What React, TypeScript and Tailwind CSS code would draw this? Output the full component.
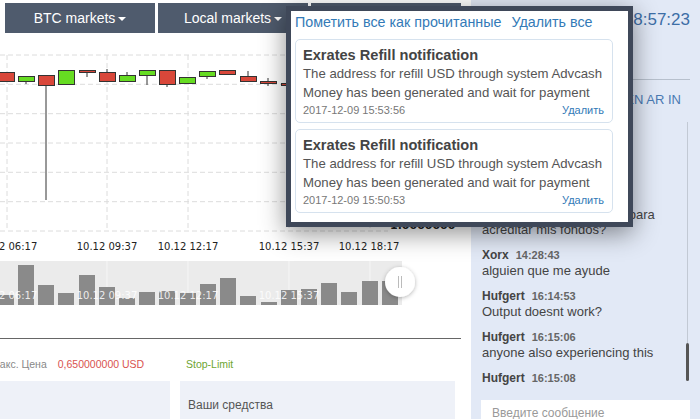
import React from "react";

type Candle = { x: number; t: number; b: number; up: boolean; wt?: number; wb?: number };

const candles: Candle[] = [
  { x: -2, t: 72, b: 81, up: false },
  { x: 18, t: 76, b: 81, up: true, wb: 84 },
  { x: 38, t: 75, b: 85, up: false, wb: 200 },
  { x: 58, t: 70, b: 84, up: true },
  { x: 79, t: 70, b: 72, up: false, wb: 77 },
  { x: 99, t: 72, b: 81, up: false, wt: 69 },
  { x: 119, t: 75, b: 81, up: true, wt: 72 },
  { x: 139, t: 70, b: 75, up: true, wb: 85 },
  { x: 159, t: 70, b: 84, up: false, wb: 87 },
  { x: 179, t: 77, b: 83, up: true },
  { x: 199, t: 71, b: 76, up: true, wb: 79 },
  { x: 219, t: 70, b: 74, up: false },
  { x: 240, t: 76, b: 81, up: false, wt: 71 },
  { x: 260, t: 81, b: 83, up: false, wt: 78, wb: 86 },
  { x: 281, t: 83, b: 85, up: false, wt: 80, wb: 88 },
  { x: 301, t: 80, b: 86, up: true },
  { x: 321, t: 78, b: 84, up: false },
];

const navBars: [number, number][] = [
  [-2, 295], [18, 265], [38, 285], [58, 293], [79, 275], [99, 287], [119, 298],
  [139, 292], [159, 291], [180, 293], [200, 284], [220, 278], [240, 296], [261, 302],
  [281, 290], [301, 289], [321, 283], [341, 292], [362, 281], [382, 281],
];

const hLines = [55, 84.3, 113.7, 143, 172.3, 201.7, 231];
const vLines = [7, 107, 188, 289, 370];
const labels: [number, string][] = [
  [7, "10.12 06:17"], [107, "10.12 09:37"], [188, "10.12 12:17"], [289, "10.12 15:37"], [369, "10.12 18:17"],
];

function Chart() {
  return (
    <svg width={471} height={305} viewBox="0 33 471 305" className="block shrink-0">
      <defs>
        <filter id="hs" x="-50%" y="-50%" width="200%" height="200%">
          <feDropShadow dx="0" dy="1" stdDeviation="2" floodColor="#000" floodOpacity="0.3" />
        </filter>
      </defs>
      {hLines.map((y) => (
        <line key={y} x1={0} x2={388} y1={y} y2={y} stroke="#dcdcdc" strokeDasharray="5 3" />
      ))}
      {vLines.map((x) => (
        <line key={x} x1={x} x2={x} y1={55} y2={231} stroke="#dcdcdc" strokeDasharray="5 3" />
      ))}
      {candles.map((c, i) => {
        const cx = c.x + 8;
        return (
          <g key={i}>
            {(c.wt !== undefined || c.wb !== undefined) && (
              <line x1={cx} x2={cx} y1={c.wt ?? c.t} y2={c.wb ?? c.b} stroke="#333" strokeWidth={1} />
            )}
            <rect x={c.x + 0.5} y={c.t + 0.5} width={16} height={Math.max(c.b - c.t, 1)} fill={c.up ? "#66dc22" : "#d9473a"} stroke="#333" strokeWidth={1} />
          </g>
        );
      })}
      <text x={390} y={229} fontFamily="'DejaVu Sans', sans-serif" fontSize={11} fontWeight="bold" fill="#222">1.0000000</text>
      {labels.map(([x, t]) => (
        <text key={t} x={x} y={250} textAnchor="middle" fontFamily="'DejaVu Sans', Verdana, sans-serif" fontSize={10} fill="#222">{t}</text>
      ))}
      <rect x={0} y={261} width={402} height={44} fill="#ebebeb" />
      {[107, 188, 289, 370].map((x) => (
        <line key={x} x1={x} x2={x} y1={261} y2={305} stroke="#f6f6f6" />
      ))}
      {navBars.map(([x, t], i) => (
        <rect key={i} x={x} y={t} width={16} height={305 - t} fill="#8a8a8a" />
      ))}
      {labels.slice(0, 4).map(([x, t]) => (
        <text key={t} x={x} y={299} textAnchor="middle" fontFamily="'DejaVu Sans', Verdana, sans-serif" fontSize={10} fill="#fff" fillOpacity={0.85}>{t}</text>
      ))}
      <circle cx={400} cy={282} r={15} fill="#fff" filter="url(#hs)" />
      <line x1={398.5} x2={398.5} y1={276} y2={288} stroke="#bbb" />
      <line x1={401.5} x2={401.5} y1={276} y2={288} stroke="#bbb" />
    </svg>
  );
}

function NavButton({ label, caret = true }: { label: string; caret?: boolean }) {
  return (
    <div className="w-[150px] h-[30px] bg-[#4f5b6d] text-white text-[14px] flex items-center justify-center">
      <span>{label}</span>
      {caret && <span className="inline-block w-0 h-0 ml-[3px] mt-[2px] border-x-[4px] border-x-transparent border-t-[4px] border-t-white" />}
    </div>
  );
}

function Card({ date }: { date: string }) {
  return (
    <div className="w-[318px] border border-[#d6e2ee] rounded-[5px] px-[7px] pt-[6px] pb-[5px] whitespace-nowrap">
      <div className="text-[14.6px] leading-[18px] font-bold text-[#444]">Exrates Refill notification</div>
      <div className="text-[13.2px] leading-[19px] text-[#555]">The address for refill USD through system Advcash</div>
      <div className="text-[13.2px] leading-[19px] text-[#555]">Money has been generated and wait for payment</div>
      <div className="mt-[1px] flex justify-between text-[11px] leading-[14px]">
        <span className="text-[#777]">{date}</span>
        <span className="text-[#337ab7] pr-[1px]">Удалить</span>
      </div>
    </div>
  );
}

function Msg({ name, time, text }: { name: string; time: string; text?: React.ReactNode }) {
  return (
    <div className="shrink-0">
      <div className="h-[15px] flex items-center font-bold whitespace-nowrap">
        <span className="text-[12px] leading-[15px] text-[#444]">{name}</span>
        <span className="text-[11px] leading-[15px] text-[#666] ml-[7px]">{time}</span>
      </div>
      {text && <div className="text-[13px] leading-[15px] text-[#444] whitespace-nowrap">{text}</div>}
    </div>
  );
}

export default function App() {
  return (
    <div className="w-[700px] h-[419px] overflow-hidden relative flex bg-white font-['Liberation_Sans',Arial,sans-serif]">
      <div className="w-[471px] flex flex-col shrink-0">
        <div className="pt-[3px] pl-[5px] flex gap-[3px] shrink-0">
          <NavButton label="BTC markets" />
          <NavButton label="Local markets" />
          <NavButton label="Fiat markets" />
        </div>
        <Chart />
        <div className="h-px w-[461px] bg-[#666] shrink-0" />
        <div className="h-[42px] pt-[18px] flex text-[10.5px] leading-[14px] shrink-0">
          <div className="w-[180px] flex gap-[11px]">
            <span className="-ml-[9px] text-[#888]">Макс. Цена</span>
            <span className="text-[#d9534f]">0,650000000 USD</span>
          </div>
          <div className="pl-[6px] text-[#6ea531]">Stop-Limit</div>
        </div>
        <div className="flex gap-[10px] h-[38px] shrink-0">
          <div className="w-[170px] bg-[#eef1f8]" />
          <div className="w-[275px] bg-[#eef1f8] pl-[8px] pt-[16px] text-[12px] leading-[16px] text-[#555]">Ваши средства</div>
        </div>
      </div>

      <div className="flex-1 bg-[#e2e9f6] flex flex-col">
        <div className="h-[79px] shrink-0 flex justify-end items-start pr-[10px] pt-[9px]">
          <span className="text-[17px] leading-[22px] text-[#3d6ea6]">18:57:23</span>
        </div>
        <div className="mr-[10px] border-b border-[#b7c0cd] shrink-0" />
        <div className="mt-[10px] h-[20px] shrink-0 flex justify-end pr-[19px] text-[13px] leading-[20px] text-[#4a7ab3]">RU EN AR IN</div>
        <div className="h-[276px] shrink-0 flex pl-[11px] pr-[11px]">
          <div className="flex-1 flex flex-col justify-end gap-[11px] overflow-hidden">
            <Msg name="Mario" time="13:55:02" text="hola" />
            <Msg name="Carlos" time="14:02:17" text={<>ya cuanto tarda en llegar para<br />acreditar mis fondos?</>} />
            <Msg name="Xorx" time="14:28:43" text="alguien que me ayude" />
            <Msg name="Hufgert" time="16:14:53" text="Output doesnt work?" />
            <Msg name="Hufgert" time="16:15:06" text="anyone also experiencing this" />
            <Msg name="Hufgert" time="16:15:08" />
          </div>
          <div className="w-[3px] flex flex-col items-center pt-[12px] pb-[5px]">
            <div className="flex-1 w-px bg-[#c2c9d4]" />
            <div className="h-[38px] w-[3px] bg-[#555] rounded-full shrink-0" />
          </div>
        </div>
        <div className="mt-[14px] mx-[10px] h-[30px] shrink-0 bg-white pl-[11px] pt-[6px] text-[12px] leading-[15px] text-[#999]">Введите сообщение</div>
      </div>

      <div className="absolute left-[286px] top-[6px] w-[347px] h-[221px] border-[5px] border-[#3f4859] bg-white px-[4px] pt-[3px] shadow-[0_6px_24px_rgba(0,0,0,0.45)]">
        <div className="flex gap-[10px] text-[14.3px] leading-[16px] text-[#337ab7] mb-[9px] whitespace-nowrap">
          <span>Пометить все как прочитанные</span>
          <span>Удалить все</span>
        </div>
        <Card date="2017-12-09 15:53:56" />
        <div className="h-[6px]" />
        <Card date="2017-12-09 15:50:53" />
      </div>
    </div>
  );
}
